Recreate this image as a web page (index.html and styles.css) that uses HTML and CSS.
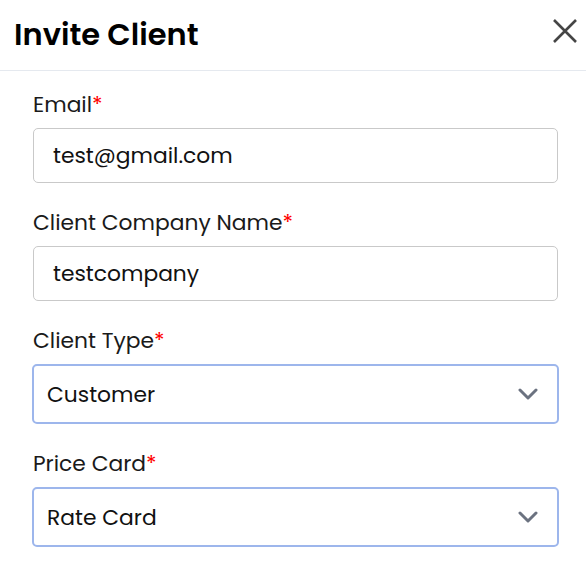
FILE: index.html
```html
<!DOCTYPE html>
<html>
<head>
<meta charset="utf-8">
<link rel="stylesheet" href="styles.css">
</head>
<body>
<div class="modal">
  <div class="header">
    <h1 class="title">Invite Client</h1>
    <svg class="close" width="26" height="26" viewBox="0 0 26 26"><path d="M2 2 L24 24 M24 2 L2 24" stroke="#454545" stroke-width="2.6" fill="none"/></svg>
  </div>
  <div class="body">
    <div class="field">
      <div class="label">Email<span class="req">*</span></div>
      <div class="input">test@gmail.com</div>
    </div>
    <div class="field">
      <div class="label">Client Company Name<span class="req">*</span></div>
      <div class="input">testcompany</div>
    </div>
    <div class="field">
      <div class="label">Client Type<span class="req">*</span></div>
      <div class="select"><span>Customer</span>
        <svg width="20" height="14" viewBox="0 0 20 14"><path d="M2 3 L10 11 L18 3" stroke="#6b7280" stroke-width="3" fill="none" stroke-linecap="round" stroke-linejoin="round"/></svg>
      </div>
    </div>
    <div class="field">
      <div class="label">Price Card<span class="req">*</span></div>
      <div class="select"><span>Rate Card</span>
        <svg width="20" height="14" viewBox="0 0 20 14"><path d="M2 3 L10 11 L18 3" stroke="#6b7280" stroke-width="3" fill="none" stroke-linecap="round" stroke-linejoin="round"/></svg>
      </div>
    </div>
  </div>
</div>
</body>
</html>
```
FILE: styles.css
```css
* { box-sizing: border-box; }
html, body { margin: 0; padding: 0; background: #fff; }
body { font-family: "Poppins", "Inter", "Noto Sans", sans-serif; color: #111; }
.modal { width: 586px; }
.header {
  height: 71px;
  border-bottom: 1px solid #e5e9ef;
  display: flex;
  align-items: flex-start;
  justify-content: space-between;
  padding: 15px 8px 0 14px;
}
.title { margin: 0; font-size: 30.5px; line-height: 40px; font-weight: 600; color: #000; }
.close { display: block; margin-top: 3px; }
.body {
  padding: 22px 28px 0 33px;
  display: flex;
  flex-direction: column;
  gap: 28px;
}
.field { display: flex; flex-direction: column; gap: 11px; }
.label { font-size: 21.8px; line-height: 24px; color: #1a1a1a; white-space: nowrap; }
.req { color: #f00; }
.input {
  height: 55px;
  border: 1px solid #c9c9c9;
  border-radius: 5px;
  padding: 0 19px;
  display: flex;
  align-items: center;
  font-size: 21.8px;
  color: #111;
}
.select {
  height: 60px;
  margin-left: -1px;
  margin-right: -1px;
  border: 2px solid #9db6ec;
  border-radius: 5px;
  padding: 0 19px 0 13px;
  display: flex;
  align-items: center;
  justify-content: space-between;
  font-size: 21.8px;
  color: #111;
}
.select svg { display: block; }
```
